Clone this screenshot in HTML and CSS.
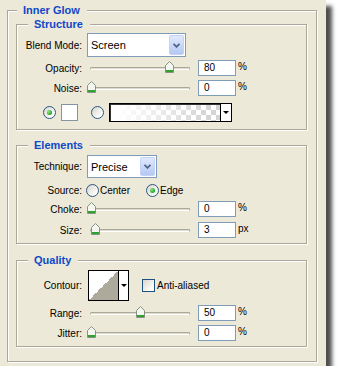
FILE: index.html
```html
<!DOCTYPE html>
<html lang="en">
<head>
    <meta charset="UTF-8">
    <title>Inner Glow</title>
    <link rel="stylesheet" href="styles.css">
</head>
<body>

    <div class="window">
        <div class="group outer">
            <div class="group-title">Inner Glow</div>

            <!-- Structure -->
            <div class="group sub sub-structure">
                <div class="group-title">Structure</div>
                <div class="row row-combo">
                    <span class="lbl">Blend Mode:</span>
                    <div class="combo combo-blend">
                        <span class="combo-text">Screen</span>
                        <span class="combo-btn"><svg width="7" height="5" viewBox="0 0 7 5"><path d="M0.5 0.8 L3.5 3.8 L6.5 0.8" fill="none" stroke="#4d6185" stroke-width="1.8"/></svg></span>
                    </div>
                </div>
                <div class="row row-slider">
                    <span class="lbl">Opacity:</span>
                    <div class="slider"><span class="thumb" style="left: 80%"></span></div>
                    <div class="num">80</div><span class="unit">%</span>
                </div>
                <div class="row row-slider">
                    <span class="lbl">Noise:</span>
                    <div class="slider"><span class="thumb" style="left: 0%"></span></div>
                    <div class="num">0</div><span class="unit">%</span>
                </div>
                <div class="row row-colors">
                    <span class="radio on"></span>
                    <span class="swatch"></span>
                    <span class="radio radio-grad"></span>
                    <div class="grad-box">
                        <span class="grad-fill"></span>
                        <span class="grad-arrow"><span class="tri"></span></span>
                    </div>
                </div>
            </div>

            <!-- Elements -->
            <div class="group sub">
                <div class="group-title">Elements</div>
                <div class="row row-technique">
                    <span class="lbl">Technique:</span>
                    <div class="combo combo-technique">
                        <span class="combo-text">Precise</span>
                        <span class="combo-btn"><svg width="7" height="5" viewBox="0 0 7 5"><path d="M0.5 0.8 L3.5 3.8 L6.5 0.8" fill="none" stroke="#4d6185" stroke-width="1.8"/></svg></span>
                    </div>
                </div>
                <div class="row row-source">
                    <span class="lbl">Source:</span>
                    <span class="radio"></span><span class="opt">Center</span>
                    <span class="radio on radio-edge"></span><span class="opt">Edge</span>
                </div>
                <div class="row row-slider">
                    <span class="lbl">Choke:</span>
                    <div class="slider"><span class="thumb" style="left: 0%"></span></div>
                    <div class="num">0</div><span class="unit">%</span>
                </div>
                <div class="row row-slider row-size">
                    <span class="lbl">Size:</span>
                    <div class="slider"><span class="thumb" style="left: 4%"></span></div>
                    <div class="num">3</div><span class="unit">px</span>
                </div>
            </div>

            <!-- Quality -->
            <div class="group sub sub-quality">
                <div class="group-title">Quality</div>
                <div class="row row-contour">
                    <span class="lbl">Contour:</span>
                    <div class="contour">
                        <span class="contour-curve"></span>
                        <span class="contour-arrow"><span class="tri"></span></span>
                    </div>
                    <span class="check"></span><span class="opt">Anti-aliased</span>
                </div>
                <div class="row row-slider">
                    <span class="lbl">Range:</span>
                    <div class="slider"><span class="thumb" style="left: 50%"></span></div>
                    <div class="num">50</div><span class="unit">%</span>
                </div>
                <div class="row row-slider">
                    <span class="lbl">Jitter:</span>
                    <div class="slider"><span class="thumb" style="left: 0%"></span></div>
                    <div class="num">0</div><span class="unit">%</span>
                </div>
            </div>
        </div>
    </div>

</body>
</html>
```

FILE: styles.css
```css
body {
    margin: 0;
    background: #fff;
    font-family: "Liberation Sans", Arial, sans-serif;
    font-size: 10px;
    color: #000;
}
.window {
    width: 326px;
    height: 366px;
    box-sizing: border-box;
    padding: 10px 0 0 7px;
    background: #ece9d8;
    box-shadow: 6px 6px 4px rgba(30, 30, 30, 0.78);
}
.group {
    border: 1px solid #aca899;
    box-shadow: inset 1px 1px 0 #fff, 1px 1px 0 #fff;
}
.group-title {
    display: table;
    margin: -7px 0 0 11px;
    padding: 0 7px 0 6px;
    line-height: 13px;
    font-size: 11px;
    font-weight: bold;
    color: #1048c8;
    background: #ece9d8;
}
.outer {
    width: 310px;
    box-sizing: border-box;
    padding: 0 9px 14px 8px;
}
.outer > .group-title {
    margin-left: 1px;
}
.sub {
    margin-top: 15px;
    padding-bottom: 5px;
}
.sub-structure {
    margin-top: 7px;
    padding-bottom: 7px;
}
.sub-quality {
    margin-top: 16px;
}
.row {
    display: flex;
    align-items: center;
    margin-top: 4px;
}
.lbl {
    width: 65px;
    flex: none;
    text-align: right;
}

/* combo boxes */
.row-combo { margin-top: 2px; }
.row-combo + .row-slider { margin-top: 3px; }
.combo {
    display: flex;
    margin-left: 5px;
    box-sizing: border-box;
    border: 1px solid #7f9db9;
    background: #fff;
    padding: 1px;
}
.combo-blend { width: 99px; height: 24px; }
.combo-technique { width: 70px; height: 23px; }
.combo-text {
    flex: 1;
    padding-left: 2px;
    font-size: 11px;
    line-height: 20px;
}
.combo-btn {
    width: 15px;
    box-sizing: border-box;
    display: flex;
    align-items: center;
    justify-content: center;
    border: 1px solid #c3d3f8;
    border-radius: 2px;
    background: linear-gradient(#e0e9fe, #b5c8f3);
}
.row-technique { margin-top: 3px; }

/* sliders */
.slider {
    position: relative;
    width: 100px;
    height: 3px;
    margin-left: 8px;
    box-sizing: border-box;
    border: 1px solid #aca899;
    border-bottom-color: #fff;
    border-radius: 2px;
    background: #dedbcf;
}
.thumb {
    position: absolute;
    top: -7px;
    width: 9px;
    height: 12px;
    margin-left: -4px;
    background: url("data:image/svg+xml;utf8,<svg xmlns='http://www.w3.org/2000/svg' width='9' height='12'><path d='M4.5 0.5 L8.5 4.5 V11.5 H0.5 V4.5 Z' fill='%23f6f6f0' stroke='%23849484'/><rect x='1' y='9' width='7' height='2' fill='%2330a030'/></svg>") no-repeat;
}
.num {
    width: 38px;
    height: 16px;
    box-sizing: border-box;
    margin-left: 8px;
    padding-left: 5px;
    border: 1px solid #7f9db9;
    background: #fff;
    line-height: 14px;
}
.unit {
    margin: -3px 0 0 2px;
}
.row-size { margin-top: 5px; }

/* radios and checkbox */
.radio, .check {
    position: relative;
    width: 13px;
    height: 13px;
    flex: none;
    box-sizing: border-box;
    border: 1px solid #2c5685;
    background: linear-gradient(135deg, #d8d6cb, #fbfbf9 75%);
}
.radio {
    border-radius: 50%;
}
.radio.on::after {
    content: "";
    position: absolute;
    left: 3px;
    top: 3px;
    width: 5px;
    height: 5px;
    border-radius: 50%;
    background: radial-gradient(circle at 35% 35%, #8ee88e, #21a121 70%);
}
.check {
    border-color: #1c5180;
    margin-left: 13px;
}
.opt {
    margin-left: 1px;
}
.row-source { margin-top: 6px; }
.row-source .radio { margin-left: 4px; }
.row-source .radio-edge { margin-left: 16px; }
.row-contour .opt { margin-left: 2px; }

/* colour row */
.row-colors {
    margin-top: 7px;
    padding-left: 26px;
}
.swatch {
    width: 17px;
    height: 17px;
    box-sizing: border-box;
    margin-left: 5px;
    border: 1px solid #8593a3;
    background: #fff;
}
.radio-grad { margin-left: 13px; }
.grad-box {
    display: flex;
    width: 123px;
    height: 19px;
    box-sizing: border-box;
    margin-left: 5px;
    border: 1px solid #000;
    box-shadow: inset 1px 1px 0 #333;
}
.grad-fill {
    flex: 1;
    margin: 1px 0 0 1px;
    background: linear-gradient(to right, #fff 5%, rgba(255, 255, 255, 0) 90%),
                repeating-conic-gradient(#d4d4d4 0 25%, #fff 0 50%) 0 0 / 10px 10px;
}
.grad-arrow, .contour-arrow {
    display: flex;
    align-items: center;
    justify-content: center;
    border-left: 1px solid #000;
    background: #fff;
}
.grad-arrow { width: 10px; }
.tri {
    width: 0;
    height: 0;
    border-left: 3px solid transparent;
    border-right: 3px solid transparent;
    border-top: 3px solid #000;
}

/* contour */
.row-contour { margin-top: 3px; }
.contour {
    display: flex;
    width: 41px;
    height: 31px;
    box-sizing: border-box;
    margin-left: 6px;
    border: 1px solid #000;
}
.contour-curve {
    width: 29px;
    background: linear-gradient(to bottom right, #fff 50%, #aeaa9b 50%);
}
.contour-arrow { flex: 1; }
```
